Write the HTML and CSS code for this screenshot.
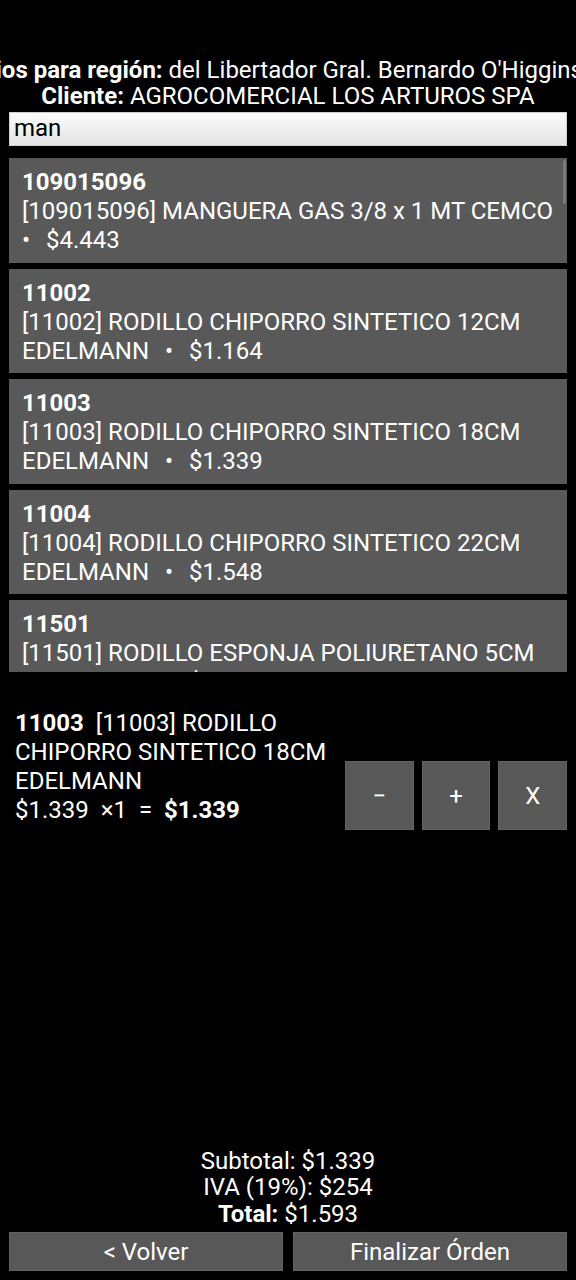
FILE: index.html
```html
<!DOCTYPE html>
<html lang="es">
<head>
<meta charset="utf-8">
<title>Orden</title>
<link rel="stylesheet" href="styles.css">
</head>
<body>
<div class="screen">
  <header class="head">
    <div class="region"><span class="region-text"><b>Precios para región:</b> del Libertador Gral. Bernardo O'Higgins</span></div>
    <div class="client"><b>Cliente:</b> AGROCOMERCIAL LOS ARTUROS SPA</div>
  </header>
  <div class="search"><span class="search-text">man</span></div>
  <div class="list">
    <div class="item"><b>109015096</b><br><span class="desc">[109015096] MANGUERA GAS 3/8 x 1 MT CEMCO<span class="gap">  </span><span class="dot">•</span>  $4.443</span></div>
    <div class="item"><b>11002</b><br><span class="desc">[11002] RODILLO CHIPORRO SINTETICO 12CM EDELMANN<span class="gap">  </span><span class="dot">•</span>  $1.164</span></div>
    <div class="item"><b>11003</b><br><span class="desc">[11003] RODILLO CHIPORRO SINTETICO 18CM EDELMANN<span class="gap">  </span><span class="dot">•</span>  $1.339</span></div>
    <div class="item"><b>11004</b><br><span class="desc">[11004] RODILLO CHIPORRO SINTETICO 22CM EDELMANN<span class="gap">  </span><span class="dot">•</span>  $1.548</span></div>
    <div class="item"><b>11501</b><br><span class="desc">[11501] RODILLO ESPONJA POLIURETANO 5CM EDELMANN<span class="gap">  </span><span class="dot">•</span>  $612</span></div>
    <div class="scrollbar"></div>
  </div>
  <div class="selected">
    <div class="sel-text"><b>11003</b>  [11003] RODILLO CHIPORRO SINTETICO 18CM EDELMANN<br>$1.339  ×1  =  <b>$1.339</b></div>
    <div class="qty">
      <div class="qbtn">−</div>
      <div class="qbtn">+</div>
      <div class="qbtn">X</div>
    </div>
  </div>
  <div class="spacer"></div>
  <div class="totals">
    <div>Subtotal: $1.339</div>
    <div>IVA (19%): $254</div>
    <div><b>Total:</b> $1.593</div>
  </div>
  <div class="actions">
    <div class="abtn">&lt; Volver</div>
    <div class="abtn">Finalizar Órden</div>
  </div>
</div>
</body>
</html>
```
FILE: styles.css
```css
html, body {
  margin: 0;
  padding: 0;
  background: #000;
}
body {
  font-family: Roboto, "Noto Sans", sans-serif;
  font-size: 24px;
  color: #fff;
  overflow: hidden;
}
.screen {
  width: 576px;
  height: 1280px;
  display: flex;
  flex-direction: column;
  overflow: hidden;
}
.head {
  padding-top: 57px;
  line-height: 26px;
  text-align: center;
}
.region {
  display: flex;
  justify-content: flex-end;
  white-space: nowrap;
  overflow: hidden;
}
.region-text {
  flex: none;
  margin-right: -7px;
}
.client {
  white-space: nowrap;
}
.search {
  margin: 3px 9px 0;
  height: 34px;
  box-sizing: border-box;
  border: 1px solid #cfcfcf;
  background: linear-gradient(#fbfbfb, #e4e4e4);
  color: #000;
  padding-left: 4px;
  line-height: 31px;
}
.list {
  position: relative;
  margin: 12px 9px 0;
  height: 514px;
  overflow: hidden;
  display: flex;
  flex-direction: column;
  gap: 6px;
}
.item {
  flex: none;
  background: #595959;
  padding: 10px 13px 7.5px;
  line-height: 29px;
  white-space: pre-wrap;
}
.gap {
  word-spacing: 2px;
}
.dot {
  margin-right: 4px;
}
.scrollbar {
  position: absolute;
  right: 1px;
  top: 2px;
  width: 3px;
  height: 44px;
  background: #7a7a7a;
  border-radius: 2px;
}
.selected {
  display: flex;
  align-items: flex-start;
  margin-top: 37px;
  padding: 0 9px 0 15px;
}
.sel-text {
  flex: 1;
  line-height: 29px;
  white-space: pre-wrap;
  padding-right: 8px;
}
.qty {
  flex: none;
  width: 222px;
  margin-top: 52px;
  display: grid;
  grid-template-columns: repeat(3, 1fr);
  gap: 8px;
}
.qbtn {
  height: 69px;
  box-sizing: border-box;
  background: #585858;
  border: 1px solid #636363;
  display: flex;
  align-items: center;
  justify-content: center;
}
.spacer {
  flex: 1;
}
.totals {
  text-align: center;
  line-height: 26.5px;
}
.actions {
  display: flex;
  gap: 10px;
  margin: 5px 9px 9px;
}
.abtn {
  flex: 1;
  height: 39px;
  box-sizing: border-box;
  background: #585858;
  border: 1px solid #636363;
  display: flex;
  align-items: center;
  justify-content: center;
}
```
